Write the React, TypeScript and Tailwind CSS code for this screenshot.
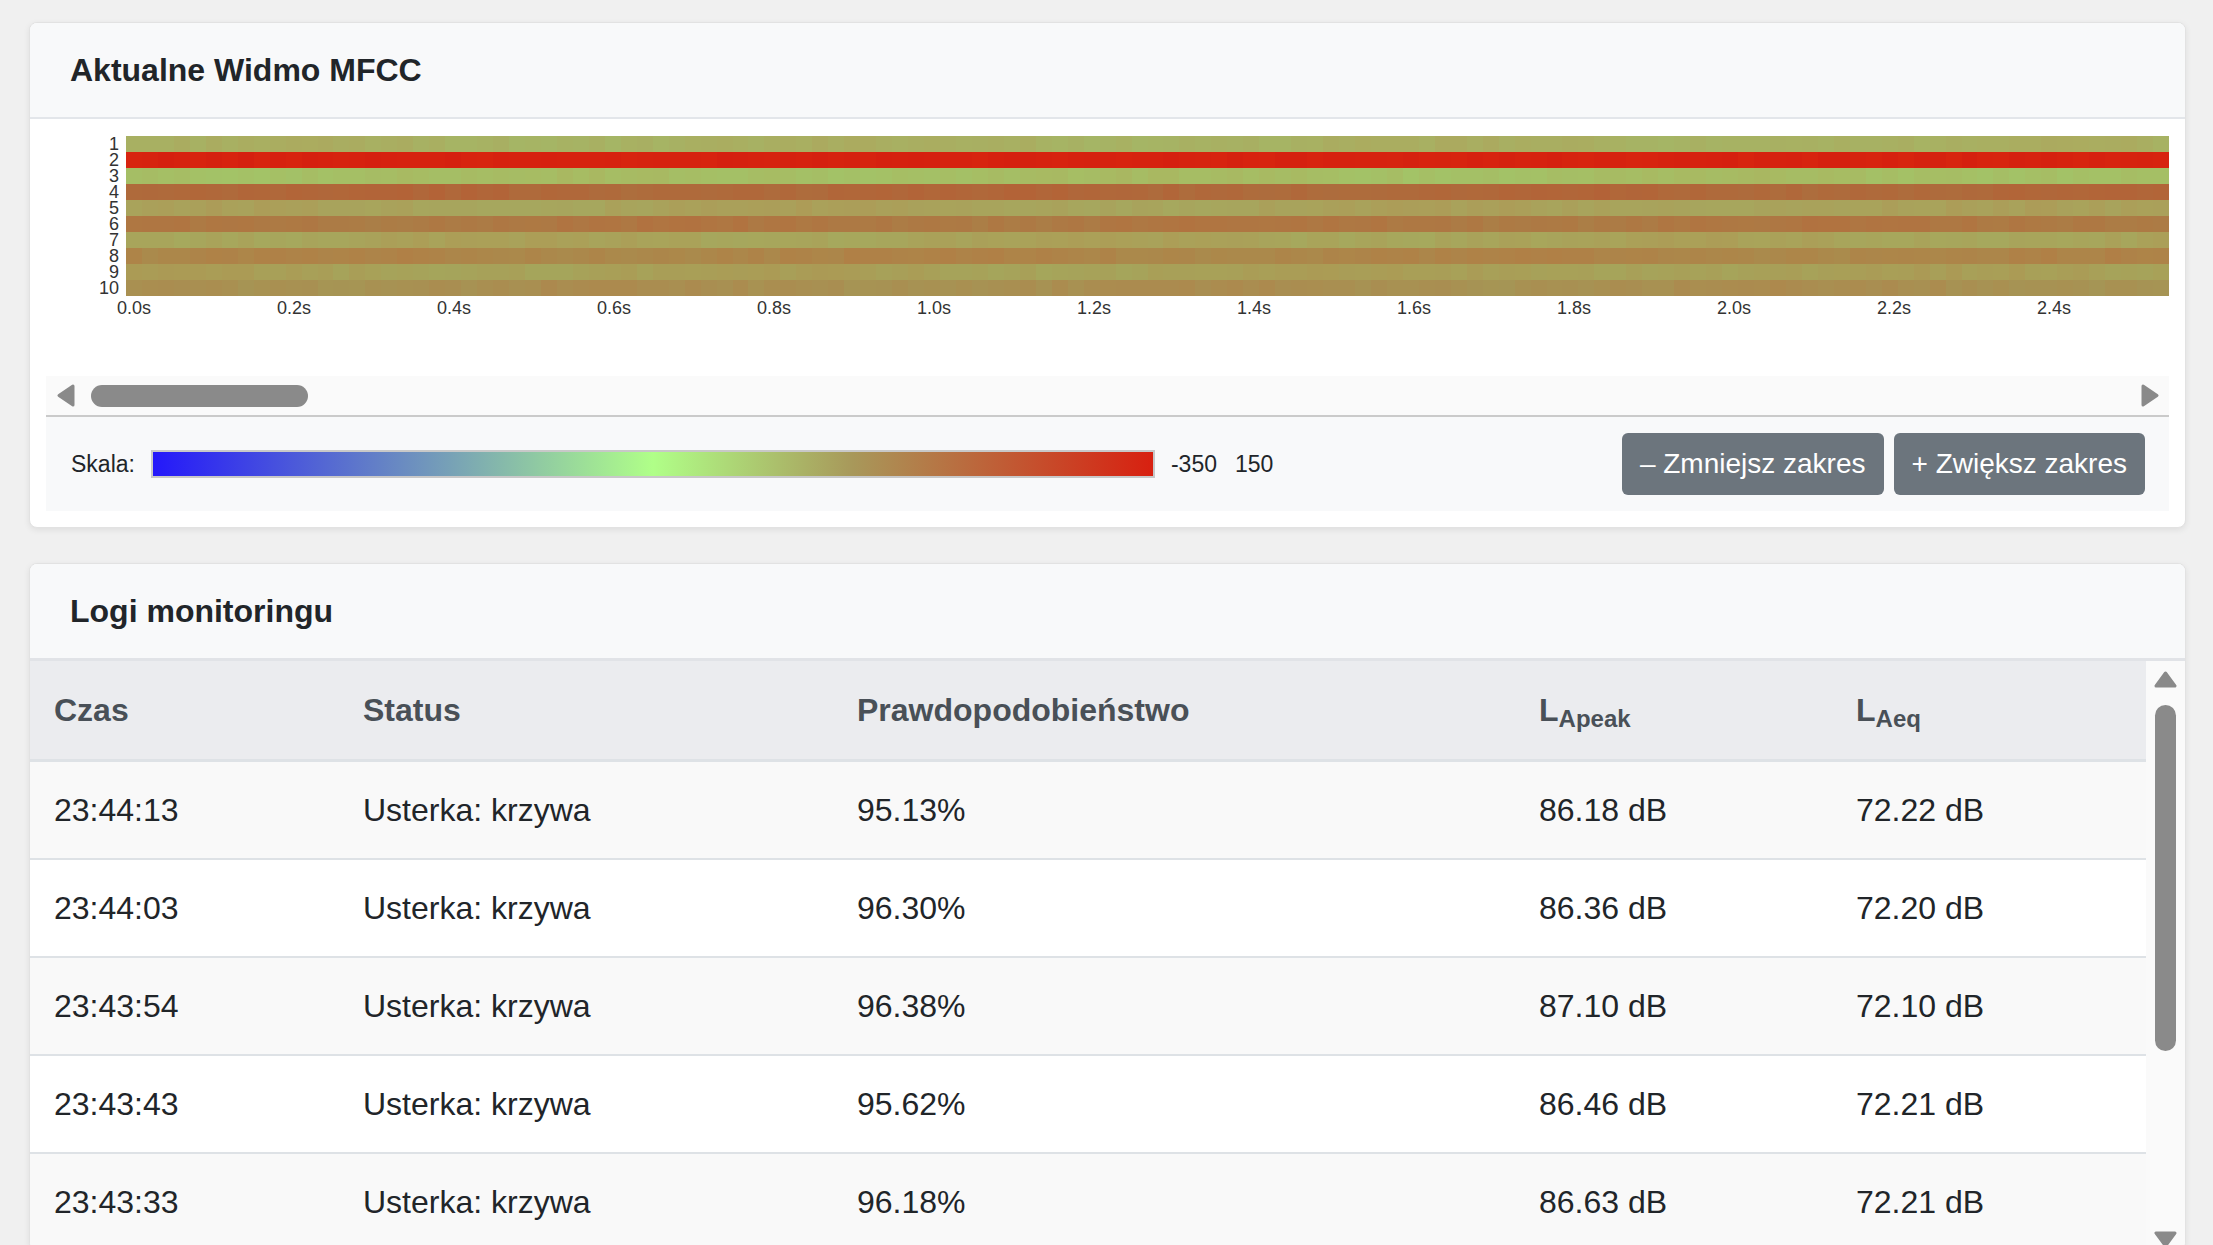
import React from "react";

const BASE: number[][] = [
  [168, 176, 98],
  [214, 34, 15],
  [166, 189, 100],
  [176, 104, 58],
  [169, 162, 91],
  [174, 120, 67],
  [169, 163, 90],
  [173, 133, 73],
  [168, 160, 88],
  [169, 143, 81],
];

function noise(a: number, b: number) {
  const x = Math.sin(a * 12.9898 + b * 78.233) * 43758.5453;
  return x - Math.floor(x);
}

function cellColor(r: number, c: number) {
  const b = BASE[r];
  if (r === 1) {
    const t = (noise(r, c) - 0.5) * 2;
    return `rgb(${b[0] + Math.round(t * 1)},${b[1] + Math.round(t * 2)},${b[2]})`;
  }
  const t = (noise(r + 3, c) - 0.5) * 0.9 + 0.45 * Math.sin(c * 0.17 + r * 1.7);
  const d = [4, -7, -4];
  return `rgb(${Math.round(b[0] + t * d[0])},${Math.round(b[1] + t * d[1])},${Math.round(b[2] + t * d[2])})`;
}

const COLS = 128;
const HW = 2043;

function Heatmap() {
  const cw = HW / COLS;
  const rects: React.ReactNode[] = [];
  for (let r = 0; r < 10; r++) {
    for (let c = 0; c < COLS; c++) {
      rects.push(
        <rect key={`${r}-${c}`} x={c * cw} y={r * 16} width={cw + 0.6} height={16} fill={cellColor(r, c)} />
      );
    }
  }
  return (
    <svg width={HW} height={160} viewBox={`0 0 ${HW} 160`} shapeRendering="crispEdges" className="block">
      {rects}
    </svg>
  );
}

const XL = ["0.0s", "0.2s", "0.4s", "0.6s", "0.8s", "1.0s", "1.2s", "1.4s", "1.6s", "1.8s", "2.0s", "2.2s", "2.4s"];

function ArrowLeft() {
  return (
    <svg width="18" height="23" viewBox="0 0 18 23">
      <polygon points="16,2 16,21 2,11.5" fill="#8a8a8a" stroke="#8a8a8a" strokeWidth="3" strokeLinejoin="round" />
    </svg>
  );
}
function ArrowRight() {
  return (
    <svg width="18" height="23" viewBox="0 0 18 23">
      <polygon points="2,2 2,21 16,11.5" fill="#8a8a8a" stroke="#8a8a8a" strokeWidth="3" strokeLinejoin="round" />
    </svg>
  );
}
function ArrowUp() {
  return (
    <svg width="23" height="17" viewBox="0 0 23 17">
      <polygon points="11.5,2 21,15 2,15" fill="#8a8a8a" stroke="#8a8a8a" strokeWidth="3" strokeLinejoin="round" />
    </svg>
  );
}
function ArrowDown() {
  return (
    <svg width="23" height="17" viewBox="0 0 23 17">
      <polygon points="2,2 21,2 11.5,15" fill="#8a8a8a" stroke="#8a8a8a" strokeWidth="3" strokeLinejoin="round" />
    </svg>
  );
}

function SpectrumCard() {
  return (
    <div className="rounded-[8px] border border-[#e2e2e2] bg-white shadow-[0_2px_6px_rgba(0,0,0,0.08)] overflow-hidden">
      <div className="h-[96px] flex items-center px-[40px] bg-[#f8f9fa] border-b-2 border-[#e3e6ea]">
        <h2 className="text-[32px] font-bold text-[#212529] leading-none">Aktualne Widmo MFCC</h2>
      </div>
      <div className="px-[16px] pt-[17px] pb-[16px]">
        <div className="h-[240px]">
          <div className="flex">
            <div className="w-[80px] flex flex-col items-end pr-[7px] text-[18px] leading-[16px] text-[#333]">
              {Array.from({ length: 10 }, (_, i) => (
                <div key={i} className="h-[16px]">{i + 1}</div>
              ))}
            </div>
            <Heatmap />
          </div>
          <div className="flex ml-[71px] mt-[2px] text-[18px] leading-[20px] text-[#333]">
            {XL.map((l) => (
              <div key={l} className="w-[160px] shrink-0">{l}</div>
            ))}
          </div>
        </div>
        <div className="h-[41px] bg-[#fafafa] border-b-2 border-[#cacaca] flex items-center pl-[11px] pr-[10px]">
          <ArrowLeft />
          <div className="ml-[16px] w-[217px] h-[22px] rounded-full bg-[#8a8a8a]" />
          <div className="flex-1" />
          <ArrowRight />
        </div>
        <div className="h-[94px] bg-[#f8f9fa] flex items-center pl-[25px] pr-[24px] text-[23px] text-[#212529]">
          <span>Skala:</span>
          <div className="ml-[16px] w-[1004px] h-[28px] border-2 border-[#c8c8c8] bg-[linear-gradient(to_right,#2418fa_0%,#b0ff88_50%,#a8985a_70%,#d82010_100%)]" />
          <span className="ml-[16px]">-350</span>
          <span className="ml-[18px]">150</span>
          <div className="ml-auto flex gap-[10px]">
            <button className="h-[62px] px-[18px] rounded-[6px] bg-[#6c757d] text-white text-[28px]">– Zmniejsz zakres</button>
            <button className="h-[62px] px-[18px] rounded-[6px] bg-[#6c757d] text-white text-[28px]">+ Zwiększ zakres</button>
          </div>
        </div>
      </div>
    </div>
  );
}

const LOGS = [
  ["23:44:13", "Usterka: krzywa", "95.13%", "86.18 dB", "72.22 dB"],
  ["23:44:03", "Usterka: krzywa", "96.30%", "86.36 dB", "72.20 dB"],
  ["23:43:54", "Usterka: krzywa", "96.38%", "87.10 dB", "72.10 dB"],
  ["23:43:43", "Usterka: krzywa", "95.62%", "86.46 dB", "72.21 dB"],
  ["23:43:33", "Usterka: krzywa", "96.18%", "86.63 dB", "72.21 dB"],
  ["23:43:23", "Usterka: krzywa", "95.87%", "86.52 dB", "72.18 dB"],
];

function LogsCard() {
  return (
    <div className="mt-[35px] rounded-[8px] border border-[#e2e2e2] bg-white shadow-[0_2px_6px_rgba(0,0,0,0.08)] overflow-hidden">
      <div className="h-[97px] flex items-center px-[40px] bg-[#f8f9fa] border-b-[3px] border-[#e1e3e7]">
        <h2 className="text-[32px] font-bold text-[#212529] leading-none">Logi monitoringu</h2>
      </div>
      <div className="flex h-[588px]">
        <div className="flex-1 overflow-hidden">
          <div className="grid grid-cols-[309px_494px_682px_317px_1fr] h-[101px] items-center bg-[#ebecef] border-b-[3px] border-[#dee2e6] text-[32px] font-bold text-[#495057]">
            <div className="pl-[24px]">Czas</div>
            <div className="pl-[24px]">Status</div>
            <div className="pl-[24px]">Prawdopodobieństwo</div>
            <div className="pl-[24px]">L<sub>Apeak</sub></div>
            <div className="pl-[24px]">L<sub>Aeq</sub></div>
          </div>
          {LOGS.map((row, i) => (
            <div
              key={i}
              className={`grid grid-cols-[309px_494px_682px_317px_1fr] h-[98px] items-center border-b-2 border-[#dee2e6] text-[32px] text-[#212529] ${i % 2 === 0 ? "bg-[#f9f9f9]" : "bg-white"}`}
            >
              {row.map((cell, j) => (
                <div key={j} className="pl-[24px]">{cell}</div>
              ))}
            </div>
          ))}
        </div>
        <div className="w-[39px] bg-[#fafafa] flex flex-col items-center pt-[10px] pb-[1px]">
          <ArrowUp />
          <div className="mt-[17px] w-[21px] h-[346px] rounded-full bg-[#8a8a8a]" />
          <div className="flex-1" />
          <ArrowDown />
        </div>
      </div>
    </div>
  );
}

export default function App() {
  return (
    <div className="h-[1245px] overflow-hidden bg-[#f0f0f0] pl-[29px] pr-[27px] pt-[22px] font-['Liberation_Sans',Arial,sans-serif]">
      <SpectrumCard />
      <LogsCard />
    </div>
  );
}
